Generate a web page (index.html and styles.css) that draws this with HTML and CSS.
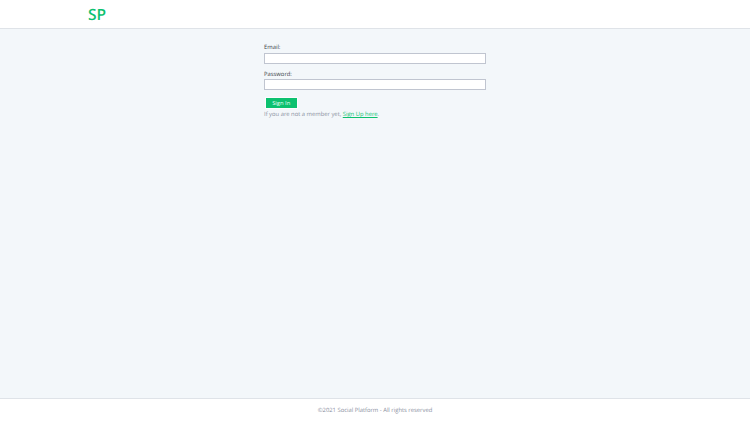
FILE: index.html
```html
<!DOCTYPE html>
<html lang="en">
<head>
<meta charset="utf-8">
<title>Social Platform</title>
<link rel="stylesheet" href="styles.css">
</head>
<body>
<header class="topbar"><div class="logo">SP</div></header>
<main class="content">
  <form class="form">
    <div class="field">
      <label class="label">Email:</label>
      <input class="input" type="text">
    </div>
    <div class="field">
      <label class="label">Password:</label>
      <input class="input" type="password">
    </div>
    <div class="actions"><button class="btn" type="button">Sign In</button></div>
    <p class="note">If you are not a member yet, <a class="link" href="#">Sign Up here</a>.</p>
  </form>
</main>
<footer class="footer">©2021 Social Platform - All rights reserved</footer>
</body>
</html>
```
FILE: styles.css
```css
* { box-sizing: border-box; }
html, body { height: 100%; }
body {
  margin: 0;
  display: flex;
  flex-direction: column;
  height: 422px;
  overflow: hidden;
  font-family: "Open Sans", sans-serif;
  font-size: 5.85px;
  text-rendering: geometricPrecision;
  background: #fff;
}
.topbar {
  height: 29px;
  flex: none;
  background: #fff;
  border-bottom: 1px solid #dfe3e8;
  padding-left: 88px;
}
.logo {
  font-size: 15.5px;
  line-height: 28px;
  font-weight: 600;
  color: #0cc16f;
}
.content {
  flex: 1;
  background: #f3f7fa;
  display: flex;
  justify-content: center;
  padding-top: 13px;
}
.form { width: 222px; }
.field { margin-bottom: 5px; }
.field + .field { margin-bottom: 6px; }
.label {
  display: block;
  font-size: 5.85px;
  line-height: 10px;
  color: #3a3f47;
  margin-bottom: 1px;
}
.input {
  display: block;
  width: 100%;
  height: 11px;
  padding: 0;
  background: #fff;
  border: 1px solid #c0c5d0;
  outline: none;
}
.field + .field .label { margin-bottom: 0; }
.actions { padding: 2px 0 0 2px; }
.btn {
  display: block;
  width: 30.5px;
  height: 10px;
  padding: 0;
  border: 0;
  background: #0cc16f;
  color: #e8fff3;
  box-shadow: 0 0 0 1px rgba(255, 255, 255, 0.7);
  font: 5.85px/10px "Open Sans", sans-serif;
}
.note {
  margin: 1px 0 0;
  font-size: 5.85px;
  line-height: 10px;
  color: #8a90a0;
}
.link { color: #0cc16f; text-decoration: underline; }
.footer {
  height: 24px;
  flex: none;
  background: #fff;
  border-top: 1px solid #dfe3e8;
  text-align: center;
  font-size: 5.85px;
  line-height: 23px;
  color: #8a90a0;
}
```
